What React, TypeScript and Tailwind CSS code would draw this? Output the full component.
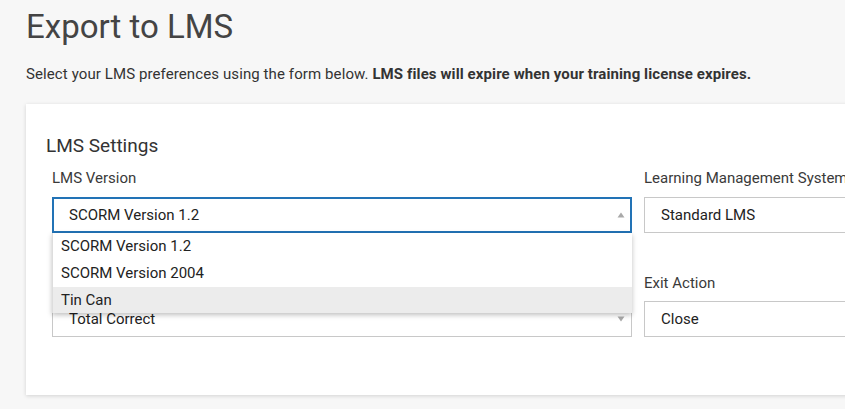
import React from "react";

function UpTri() {
  return (
    <svg width="8" height="6" viewBox="0 0 8 6" className="shrink-0">
      <path d="M4 0.5 L7.5 5.5 L0.5 5.5 Z" fill="#a9a9a9" />
    </svg>
  );
}
function DownTri() {
  return (
    <svg width="8" height="6" viewBox="0 0 8 6" className="shrink-0">
      <path d="M0.5 0.5 L7.5 0.5 L4 5.5 Z" fill="#a9a9a9" />
    </svg>
  );
}

export default function App() {
  return (
    <div className="w-[845px] h-[409px] overflow-hidden bg-[#f7f7f7] font-['Roboto',sans-serif] text-[#333]">
      <div className="pl-[26px]">
        <h1 className="pt-[8px] text-[33px] leading-[38px] text-[#444] font-normal">Export to LMS</h1>
        <p className="mt-[18px] text-[15px] leading-[20px] tracking-[0.1px] text-[#333] whitespace-nowrap">
          Select your LMS preferences using the form below.{" "}
          <span className="font-bold">LMS files will expire when your training license expires.</span>
        </p>
        <div className="mt-[20px] w-[1240px] bg-white shadow-[0_1px_4px_rgba(0,0,0,0.15)] pl-[20px] pt-[31px] pb-[58px]">
          <h2 className="text-[19px] leading-[22px] text-[#333] font-normal">LMS Settings</h2>
          <div className="mt-[11px] flex gap-[12px] pl-[6px]">
            <div className="w-[580px] flex flex-col">
              <label className="text-[15px] leading-[20px] text-[#3a3a3a]">LMS Version</label>
              <div className="relative mt-[9px]">
                <div className="h-[36px] border-2 border-[#2273b6] flex items-center justify-between pl-[15px] pr-[5px] text-[15px] text-[#222]">
                  <span>SCORM Version 1.2</span>
                  <UpTri />
                </div>
                <div className="absolute left-0 right-0 top-[36px] z-10 bg-white shadow-[0_2px_5px_rgba(0,0,0,0.25)] border-l border-[#ddd] text-[15px] text-[#222]">
                  <div className="h-[27px] flex items-center pl-[8px]">SCORM Version 1.2</div>
                  <div className="h-[27px] flex items-center pl-[8px]">SCORM Version 2004</div>
                  <div className="h-[26px] flex items-center pl-[8px] bg-[#ececec]">Tin Can</div>
                </div>
              </div>
              <label className="mt-[40px] text-[15px] leading-[20px] text-[#3a3a3a]">Score Reporting</label>
              <div className="mt-[8px] h-[36px] border border-[#c8c8c8] flex items-center justify-between pl-[16px] pr-[6px] text-[15px] text-[#222]">
                <span>Total Correct</span>
                <DownTri />
              </div>
            </div>
            <div className="w-[580px] flex flex-col">
              <label className="text-[15px] leading-[20px] text-[#3a3a3a] whitespace-nowrap">Learning Management System</label>
              <div className="mt-[9px] h-[36px] border border-[#c8c8c8] flex items-center pl-[16px] text-[15px] text-[#222]">
                Standard LMS
              </div>
              <label className="mt-[40px] text-[15px] leading-[20px] text-[#3a3a3a]">Exit Action</label>
              <div className="mt-[8px] h-[36px] border border-[#c8c8c8] flex items-center pl-[16px] text-[15px] text-[#222]">
                Close
              </div>
            </div>
          </div>
        </div>
      </div>
    </div>
  );
}
